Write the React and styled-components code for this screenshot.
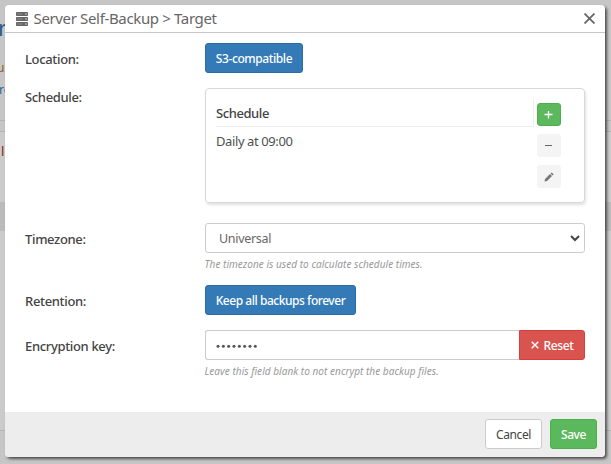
import React from "react";
import styled, { createGlobalStyle } from "styled-components";

const Global = createGlobalStyle`
  * { box-sizing: border-box; }
  body { margin: 0; overflow: hidden; background: #c8c8c8; font-family: "Noto Sans", sans-serif; font-size: 13px; color: #333; }
`;

const Viewport = styled.div`
  position: relative;
  width: 611px;
  height: 464px;
  overflow: hidden;
`;
const PageBehind = styled.div`
  display: flex;
  flex-direction: column;
  height: 464px;
  background: #c6c6c6;
`;
const PageIntro = styled.div`
  flex: 0 0 121px;
  border-bottom: 1px solid #b4b4b4;
  overflow: hidden;
`;
const PageWord = styled.div`
  height: ${(p) => p.$h}px;
  padding-top: ${(p) => p.$top}px;
  line-height: 20px;
  white-space: nowrap;
  font-size: ${(p) => p.$size || 12}px;
  text-indent: ${(p) => p.$indent || 0}px;
  color: ${(p) => p.$color};
`;
const PageCard = styled.div`
  flex: 0 0 300px;
  margin-top: 10px;
  border-top: 1px solid #b4b4b4;
  border-bottom: 1px solid #b4b4b4;
  background: #cbcbcb;
`;
const PageBand = styled.div`
  height: 29px;
  background: #bbb;
`;

const Dialog = styled.section`
  position: absolute;
  left: 5px;
  top: 5px;
  width: 600px;
  height: 452px;
  display: flex;
  flex-direction: column;
  overflow: hidden;
  background: #fff;
  border-radius: 4px;
  box-shadow: 2px 2px 3px rgba(0, 0, 0, 0.6);
`;
const Header = styled.header`
  flex: 0 0 28px;
  display: flex;
  align-items: center;
  padding: 0 10px 0 11px;
  border-bottom: 1px solid #c8c8c8;
  color: #666;
`;
const Title = styled.h1`
  flex: 1;
  margin: 0 0 0 5.5px;
  font-size: 15px;
  font-weight: 400;
  line-height: 27px;
  letter-spacing: -0.35px;
`;
const Body = styled.div`
  flex: 1;
  padding: 10px 20px 0;
`;
const Row = styled.div`
  display: grid;
  grid-template-columns: 180px 380px;
  height: ${(p) => p.$height}px;
  align-items: start;
`;
const Label = styled.label`
  padding-top: 6px;
  font-size: 13px;
  font-weight: 500;
  line-height: 20px;
  letter-spacing: -0.34px;
  color: #444;
`;
const TopLabel = styled(Label)`
  padding-top: 0;
  line-height: 18px;
`;
const tones = {
  primary: ["#337ab7", "#2e6da4", "#fff"],
  success: ["#5cb85c", "#4cae4c", "#fff"],
  danger: ["#d9534f", "#d43f3a", "#fff"],
  plain: ["#fff", "#ccc", "#444"],
  muted: ["#f4f4f4", "#f4f4f4", "#777"],
};
const Button = styled.button`
  display: inline-flex;
  align-items: center;
  justify-content: center;
  gap: 5px;
  width: ${(p) => p.$width}px;
  height: 30px;
  padding: 0;
  border: 1px solid ${(p) => tones[p.$tone][1]};
  border-radius: 3px;
  background: ${(p) => tones[p.$tone][0]};
  color: ${(p) => tones[p.$tone][2]};
  font: ${(p) => (p.$tone === "plain" ? 400 : 500)} 12px "Noto Sans", sans-serif;
  letter-spacing: ${(p) => p.$spacing || -0.4}px;
  white-space: nowrap;
`;
const ResetButton = styled(Button)`
  border-radius: 0 3px 3px 0;
`;
const IconButton = styled(Button)`
  width: 24px;
  height: 23px;
  padding-right: 1px;
`;
const Panel = styled.div`
  display: flex;
  gap: 3px;
  height: 115px;
  padding: 10px;
  border: 1px solid #d8d8d8;
  border-radius: 4px;
  box-shadow: 1px 2px 3px rgba(0, 0, 0, 0.12);
`;
const Table = styled.div`
  width: 318px;
`;
const TableHead = styled.div`
  height: 28px;
  border-right: 1px solid #eee;
  border-bottom: 1px solid #eee;
  font-weight: 500;
  line-height: 29px;
  letter-spacing: -0.42px;
  color: #444;
`;
const TableCell = styled.div`
  line-height: 28px;
  letter-spacing: -0.4px;
  color: #505050;
`;
const Tools = styled.div`
  display: flex;
  flex-direction: column;
  gap: 8px;
  padding-top: 4px;
`;
const Field = styled.div`
  display: flex;
  align-items: center;
  justify-content: space-between;
  width: ${(p) => p.$width}px;
  height: 30px;
  padding: 1px 4px 0 13px;
  border: 1px solid #ccc;
  border-radius: 3px;
  font-size: 12.5px;
  letter-spacing: -0.3px;
  color: #666;
`;
const KeyField = styled(Field)`
  padding-left: 10px;
  border-right: 0;
  border-radius: 3px 0 0 3px;
`;
const InputGroup = styled.div`
  display: flex;
`;
const Help = styled.p`
  margin: 2px 0 0;
  font-size: 10px;
  font-style: italic;
  line-height: 18px;
  letter-spacing: 0.04px;
  text-indent: -0.5px;
  color: #999;
`;
const Footer = styled.footer`
  flex: 0 0 45px;
  display: flex;
  justify-content: flex-end;
  gap: 8px;
  padding: 7px 8px;
  background: #ededed;
`;

const ServerIcon = () => (
  <svg width="12" height="14" viewBox="0 0 12 14">
    {[0, 5, 10].map((y) => (
      <g key={y}>
        <rect x="0" y={y} width="12" height="4" rx="0.8" fill="#666" />
        <path d={`M1 ${y + 2}h5.5`} stroke="#999" strokeWidth="0.8" />
        <path d={`M9.3 ${y + 2}h1.4`} stroke="#fff" />
      </g>
    ))}
  </svg>
);
const CloseIcon = () => (
  <svg width="11" height="11" viewBox="0 0 11 11">
    <path d="M.5.5l10 10M10.5.5l-10 10" stroke="#666" strokeWidth="1.8" />
  </svg>
);
const PlusIcon = () => (
  <svg width="9" height="9" viewBox="0 0 9 9">
    <path d="M.5 4.5h8M4.5 1v7.5" stroke="#fff" strokeWidth="1.4" />
  </svg>
);
const MinusIcon = () => (
  <svg width="9" height="9" viewBox="0 0 9 9">
    <path d="M1 4.5h7" stroke="#666" />
  </svg>
);
const PencilIcon = () => (
  <svg width="10" height="10" viewBox="0 0 10 10">
    <path d="M.5 9.5 1 7 6 2l2 2-5 5zM6.6 1.4 7.7.4l2 1.9-1.1 1.1z" fill="#777" />
  </svg>
);
const ResetIcon = () => (
  <svg width="8" height="8" viewBox="0 0 8 8">
    <path d="m.7.7 6.6 6.6M7.3.7.7 7.3" stroke="#fff" strokeWidth="1.4" />
  </svg>
);
const ChevronIcon = () => (
  <svg width="10" height="7" viewBox="0 0 10 7">
    <path d="m1 1 4 4 4-4" fill="none" stroke="#444" strokeWidth="2" />
  </svg>
);
const PasswordDots = () => (
  <svg width="42" height="6" viewBox="0 0 42 6">
    {Array.from({ length: 8 }, (_, i) => (
      <circle key={i} cx={2 + i * 5.33} cy="3.3" r="1.5" fill="#555" />
    ))}
  </svg>
);

export default function App() {
  return (
    <>
      <Global />
      <Viewport>
        <PageBehind aria-hidden="true">
          <PageIntro>
            <PageWord $h={56} $top={17} $indent={-2} $size={22} $color="#2c5b85">r</PageWord>
            <PageWord $h={22} $top={2} $indent={-3} $color="#8a5a20">u</PageWord>
            <PageWord $h={22} $top={2} $indent={-1} $color="#226699">ro</PageWord>
          </PageIntro>
          <PageCard>
            <PageWord $h={70} $top={9} $indent={1} $size={13} $color="#8a2020">l</PageWord>
            <PageBand />
          </PageCard>
        </PageBehind>
        <Dialog role="dialog">
          <Header>
            <ServerIcon />
            <Title>Server Self-Backup &gt; Target</Title>
            <CloseIcon />
          </Header>
          <Body>
            <Row $height={45}>
              <Label>Location:</Label>
              <Button $tone="primary" $width={98}>S3-compatible</Button>
            </Row>
            <Row $height={135}>
              <TopLabel>Schedule:</TopLabel>
              <Panel>
                <Table>
                  <TableHead>Schedule</TableHead>
                  <TableCell>Daily at 09:00</TableCell>
                </Table>
                <Tools>
                  <IconButton $tone="success"><PlusIcon /></IconButton>
                  <IconButton $tone="muted"><MinusIcon /></IconButton>
                  <IconButton $tone="muted"><PencilIcon /></IconButton>
                </Tools>
              </Panel>
            </Row>
            <Row $height={62}>
              <Label>Timezone:</Label>
              <div>
                <Field $width={380}>Universal<ChevronIcon /></Field>
                <Help>The timezone is used to calculate schedule times.</Help>
              </div>
            </Row>
            <Row $height={45}>
              <Label>Retention:</Label>
              <Button $tone="primary" $width={151} $spacing={-0.46}>Keep all backups forever</Button>
            </Row>
            <Row $height={60}>
              <Label>Encryption key:</Label>
              <div>
                <InputGroup>
                  <KeyField $width={314}><PasswordDots /></KeyField>
                  <ResetButton $tone="danger" $width={66}><ResetIcon />Reset</ResetButton>
                </InputGroup>
                <Help>Leave this field blank to not encrypt the backup files.</Help>
              </div>
            </Row>
          </Body>
          <Footer>
            <Button $tone="plain" $width={57}>Cancel</Button>
            <Button $tone="success" $width={47}>Save</Button>
          </Footer>
        </Dialog>
      </Viewport>
    </>
  );
}
